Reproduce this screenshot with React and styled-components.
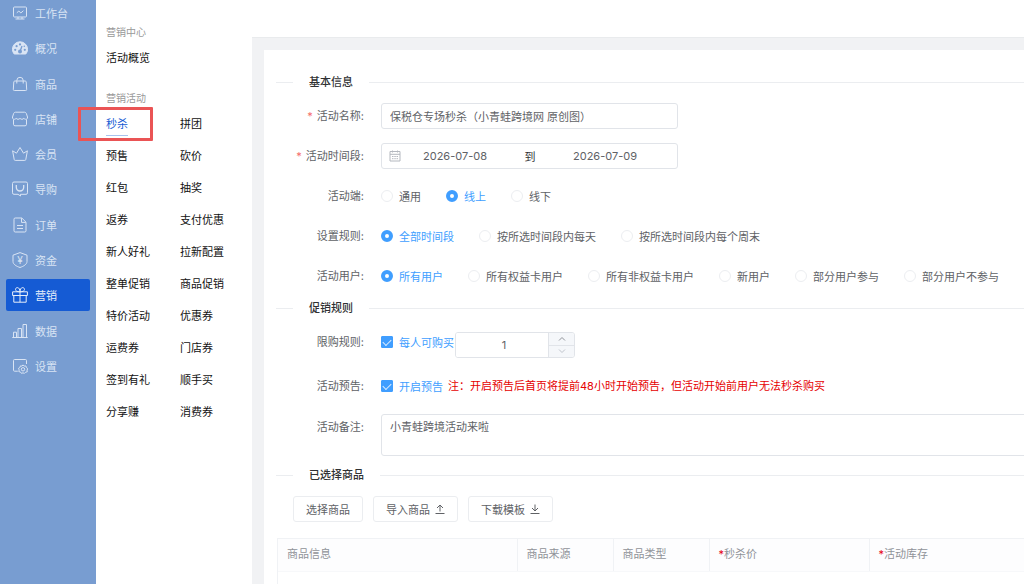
import React, { useState } from 'react'
import styled, { createGlobalStyle, css } from 'styled-components'

const sideItems = [
    { icon: 'desk', label: '工作台' },
    { icon: 'gauge', label: '概况' },
    { icon: 'bag', label: '商品' },
    { icon: 'shop', label: '店铺' },
    { icon: 'crown', label: '会员' },
    { icon: 'guide', label: '导购' },
    { icon: 'order', label: '订单' },
    { icon: 'money', label: '资金' },
    { icon: 'gift', label: '营销' },
    { icon: 'chart', label: '数据' },
    { icon: 'setting', label: '设置' }
]

const activities = [
    '秒杀', '拼团',
    '预售', '砍价',
    '红包', '抽奖',
    '返券', '支付优惠',
    '新人好礼', '拉新配置',
    '整单促销', '商品促销',
    '特价活动', '优惠券',
    '运费券', '门店券',
    '签到有礼', '顺手买',
    '分享赚', '消费券'
]

const clients = ['通用', '线上', '线下']
const rules = ['全部时间段', '按所选时间段内每天', '按所选时间段内每个周末']
const users = ['所有用户', '所有权益卡用户', '所有非权益卡用户', '新用户', '部分用户参与', '部分用户不参与']

const initialFormValues = {
    name: '保税仓专场秒杀（小青蛙跨境网 原创图）',
    start: '2026-07-08',
    end: '2026-07-09',
    client: '线上',
    rule: '全部时间段',
    user: '所有用户',
    limited: true,
    limit: 1,
    preview: true,
    remark: '小青蛙跨境活动来啦'
}

const icons = {
    desk: <>
        <rect x='1.5' y='2' width='13' height='10' rx='1' />
        <path d='M4.800 7.800l2-1.800 2 2 2.600-2.300M3.500 14h9M6 12v2M10 12v2' />
    </>,
    gauge: <>
        <path d='M2.200 14A7.600 7.600 0 0 1 .4 9.400a7.600 7.600 0 0 1 15.200 0 7.600 7.600 0 0 1-1.800 4.600z' fill='currentColor' />
        <g fill='#789dd1' stroke='none'>
            <circle cx='3.200' cy='9.800' r='1.100' />
            <circle cx='4.600' cy='6.200' r='1.100' />
            <circle cx='8' cy='4.400' r='1.100' />
            <circle cx='12.800' cy='9.800' r='1.100' />
            <circle cx='12.300' cy='6.200' r='.8' />
            <circle cx='8' cy='11.600' r='2' />
        </g>
        <path d='M8.200 11l1.800-5' stroke='#789dd1' strokeWidth='1.300' />
    </>,
    bag: <>
        <path d='M2.800 5h10.400a1 1 0 0 1 1 .9l.5 7.500a1 1 0 0 1-1 1.100H2.300a1 1 0 0 1-1-1.100l.5-7.500a1 1 0 0 1 1-.9z' />
        <path d='M4.800 7.500V4.500a3.200 3.200 0 0 1 6.400 0v3' />
    </>,
    shop: <>
        <path d='M3.500 1.200h9a2 2 0 0 1 1.800 1.200L15.500 6v1.300c-1 1.300-2.600 1.300-3.600 0-1 1.300-2.900 1.300-3.900 0-1 1.300-2.900 1.300-3.900 0-1 1.300-2.600 1.300-3.600 0V6l1.200-3.600a2 2 0 0 1 1.800-1.200z' />
        <path d='M1.500 8.500v4.800a1.500 1.500 0 0 0 1.500 1.500h10a1.500 1.500 0 0 0 1.500-1.500V8.500' />
    </>,
    crown: <path d='M.6 4.800l3.900 2.400L8 1.500l3.500 5.700 3.900-2.400-1.600 8.700a1 1 0 0 1-1 .9H3.200a1 1 0 0 1-1-.9z' />,
    guide: <>
        <path d='M2 1h12a1.500 1.500 0 0 1 1.500 1.500v9.300a1.500 1.500 0 0 1-1.500 1.500H8.500V15l-2.500-1.700H2A1.500 1.500 0 0 1 .5 11.800V2.500A1.500 1.500 0 0 1 2 1z' />
        <path d='M4.300 4v2.300a3.700 3.700 0 0 0 7.400 0V4' strokeWidth='1.300' />
    </>,
    order: <>
        <path d='M3.200 1h6.600l4.200 4.200v8.600a1.200 1.200 0 0 1-1.200 1.200H3.200A1.200 1.200 0 0 1 2 13.800V2.200A1.200 1.200 0 0 1 3.200 1z' />
        <path d='M9.500 1.200v4.200h4.300M5 8.500h6M5 11.500h6' />
    </>,
    money: <>
        <path d='M8 .6l7 2.600v6.300c0 2.800-3.400 4.800-7 6-3.600-1.200-7-3.200-7-6V3.200z' />
        <text x='8' y='11.500' textAnchor='middle' fontSize='10' fill='currentColor' stroke='none'>¥</text>
    </>,
    gift: <>
        <path d='M.6 4.800h14.800v3.700H.6zM1.800 8.500h12.400v6.700H1.800zM8 4.800v10.400' />
        <path d='M8 4.800C5.200 4.800 3.500 4 3.500 2.500 3.500 1.300 4.400.6 5.400.6 7.100.6 8 2.600 8 4.800zm0 0c2.800 0 4.500-.8 4.500-2.300 0-1.200-.9-1.900-1.900-1.900C8.900.6 8 2.600 8 4.800z' />
    </>,
    chart: <path d='M1.500 14.500V9.200h3v5.300M6 14.500v-9h3.500v9M11 14.500v-13h3.500v13M.3 14.500h15.400' />,
    setting: <>
        <path d='M14.500 6V2.500a1 1 0 0 0-1-1h-11a1 1 0 0 0-1 1v9.700a1 1 0 0 0 1 1h3.300' />
        <path d='M11 6.900l1.200 1.200 1.700-.2.500 1.700 1.400 1-.8 1.500.3 1.700-1.700.4-1.200 1.200-1.400-.6-1.500.6-1-1.400-1.700-.4.400-1.700-.8-1.500 1.500-.9.500-1.600 1.600.2z' />
        <circle cx='11' cy='11.300' r='1.700' />
    </>
}

function Icon ({ name }){
    return <Svg viewBox='0 0 16 16' aria-hidden='true'>{icons[name]}</Svg>
}

function RadioGroup ({ name, options, value, onChange }){
    return <Options>
        {options.map(option => (
            <Option key={option} $checked={option === value}>
                <Radio name={name} value={option} checked={option === value} onChange={onChange} />
                {option}
            </Option>
        ))}
    </Options>
}

function App (){
    const [formValues, setFormValues] = useState(initialFormValues)

    function handleChange (e){
        const { name, value, type, checked } = e.target
        setFormValues({
            ...formValues,
            [name]: type === 'checkbox' ? checked : value
        })
    }

    const step = amount => {
        setFormValues({ ...formValues, limit: Math.max(1, Number(formValues.limit) + amount) })
    }

    return <Page>
        <GlobalStyle />
        <Sidebar>
            <SideList>
                {sideItems.map(item => (
                    <li key={item.label}>
                        <SideLink href='#' $active={item.label === '营销'}>
                            <Icon name={item.icon} />
                            {item.label}
                        </SideLink>
                    </li>
                ))}
            </SideList>
        </Sidebar>

        <Submenu>
            <MenuTitle>营销中心</MenuTitle>
            <MenuGrid>
                <MenuCell><MenuLink href='#'>活动概览</MenuLink></MenuCell>
            </MenuGrid>
            <MenuTitle>营销活动</MenuTitle>
            <MenuGrid>
                {activities.map((label, i) => (
                    <MenuCell key={label}>
                        <MenuLink href='#' $active={i === 0}>{label}</MenuLink>
                        {i === 0 && <Marker />}
                    </MenuCell>
                ))}
            </MenuGrid>
        </Submenu>

        <Main>
            <Topbar />
            <Card>
                <Divider>基本信息</Divider>
                <Rows $gap={14}>
                    <Row>
                        <Label htmlFor='name' $required>活动名称:</Label>
                        <TextInput id='name' name='name' value={formValues.name} onChange={handleChange} />
                    </Row>
                    <Row>
                        <Label htmlFor='start' $required>活动时间段:</Label>
                        <DateRange>
                            <CalendarSvg viewBox='0 0 12 12' aria-hidden='true'>
                                <path d='M1 1.500h10v9.500H1zM1 4.300h10M3.500.5v2M8.500.5v2M3 6.500h1.500M5.300 6.500h1.500M7.500 6.500H9M3 8.700h1.500M5.300 8.700h1.500M7.500 8.700H9' />
                            </CalendarSvg>
                            <DateInput id='start' name='start' value={formValues.start} onChange={handleChange} />
                            <DateTo>到</DateTo>
                            <DateInput name='end' aria-label='结束日期' value={formValues.end} onChange={handleChange} />
                        </DateRange>
                    </Row>
                    <Row>
                        <Label as='span'>活动端:</Label>
                        <RadioGroup name='client' options={clients} value={formValues.client} onChange={handleChange} />
                    </Row>
                    <Row>
                        <Label as='span'>设置规则:</Label>
                        <RadioGroup name='rule' options={rules} value={formValues.rule} onChange={handleChange} />
                    </Row>
                    <Row>
                        <Label as='span'>活动用户:</Label>
                        <RadioGroup name='user' options={users} value={formValues.user} onChange={handleChange} />
                    </Row>
                </Rows>

                <Divider>促销规则</Divider>
                <Rows $gap={15}>
                    <Row>
                        <Label as='span'>限购规则:</Label>
                        <Option $checked={formValues.limited}>
                            <Checkbox name='limited' checked={formValues.limited} onChange={handleChange} />
                            每人可购买
                        </Option>
                        <NumberField>
                            <NumberInput name='limit' aria-label='限购数量' value={formValues.limit} onChange={handleChange} />
                            <Steppers>
                                <Stepper type='button' aria-label='增加' onClick={() => step(1)}>
                                    <ArrowSvg viewBox='0 0 8 8'><path d='M1 5.500l3-3 3 3' /></ArrowSvg>
                                </Stepper>
                                <Stepper type='button' aria-label='减少' disabled={formValues.limit <= 1} onClick={() => step(-1)}>
                                    <ArrowSvg viewBox='0 0 8 8'><path d='M1 2.500l3 3 3-3' /></ArrowSvg>
                                </Stepper>
                            </Steppers>
                        </NumberField>
                    </Row>
                    <Row>
                        <Label as='span'>活动预告:</Label>
                        <Option $checked={formValues.preview}>
                            <Checkbox name='preview' checked={formValues.preview} onChange={handleChange} />
                            开启预告
                        </Option>
                        <Note>注：开启预告后首页将提前48小时开始预告，但活动开始前用户无法秒杀购买</Note>
                    </Row>
                    <Row>
                        <Label htmlFor='remark'>活动备注:</Label>
                        <TextArea id='remark' name='remark' value={formValues.remark} onChange={handleChange} />
                    </Row>
                </Rows>

                <Divider>已选择商品</Divider>
                <Actions>
                    <Button type='button'>选择商品</Button>
                    <Button type='button'>
                        导入商品
                        <ButtonSvg viewBox='0 0 10 10'><path d='M5 7.500V1M2 4l3-3 3 3M.5 9.500h9' /></ButtonSvg>
                    </Button>
                    <Button type='button'>
                        下载模板
                        <ButtonSvg viewBox='0 0 10 10'><path d='M5 .5V7M2 4l3 3 3-3M.5 9.500h9' /></ButtonSvg>
                    </Button>
                </Actions>
                <TableWrap>
                    <Table>
                        <thead>
                            <tr>
                                <Th $width={239}>商品信息</Th>
                                <Th $width={96}>商品来源</Th>
                                <Th $width={96}>商品类型</Th>
                                <Th $width={160}><Star>*</Star>秒杀价</Th>
                                <Th><Star>*</Star>活动库存</Th>
                            </tr>
                        </thead>
                    </Table>
                </TableWrap>
            </Card>
        </Main>
    </Page>
}

export default App

const GlobalStyle = createGlobalStyle`
    * {
        box-sizing: border-box;
    }
    body {
        margin: 0;
        overflow: hidden;
        background: #f1f2f4;
    }
    body, input, textarea, button {
        font-family: Inter, 'Noto Sans CJK SC', sans-serif;
        font-size: 11px;
        color: #606266;
    }
    a {
        text-decoration: none;
    }
`

const Page = styled.div`
    display: flex;
    height: 100vh;
    overflow: hidden;
`

const Sidebar = styled.nav`
    display: flex;
    flex: 0 0 96px;
    padding: 0 6px 202px;
    background: #789dd1;
`

const SideList = styled.ul`
    display: flex;
    flex: 1;
    flex-direction: column;
    justify-content: space-between;
    margin: -3px 0 0;
    padding: 0;
    list-style: none;
`

const SideLink = styled.a`
    display: flex;
    align-items: center;
    gap: 7px;
    height: 32px;
    padding-left: 6px;
    border-radius: 2px;
    color: #d9e4f4;
    ${({ $active }) => $active && css`
        background: #155bd4;
        color: #e6eefb;
    `}
`

const Svg = styled.svg`
    width: 16px;
    height: 16px;
    fill: none;
    stroke: currentColor;
    stroke-linejoin: round;
`

const Submenu = styled.nav`
    flex: 0 0 156px;
    padding: 24px 0 0 10px;
    background: #fff;
`

const MenuTitle = styled.h2`
    margin: 0 0 2px;
    font-size: 10px;
    font-weight: 400;
    line-height: 16px;
    color: #999;
`

const MenuGrid = styled.ul`
    display: grid;
    grid-template-columns: 74px 1fr;
    margin: 0 0 16px;
    padding: 0;
    list-style: none;
`

const MenuCell = styled.li`
    position: relative;
    display: flex;
    align-items: center;
    height: 32px;
`

const MenuLink = styled.a`
    line-height: 22px;
    border-bottom: 1px solid transparent;
    color: #111;
    ${({ $active }) => $active && css`
        border-color: #a9c3ee;
        color: #155bd4;
    `}
`

const Marker = styled.span`
    position: absolute;
    top: -1px;
    left: -28px;
    width: 75px;
    height: 34px;
    border: 3px solid #ea5455;
    border-radius: 1px;
    pointer-events: none;
`

const Main = styled.main`
    display: flex;
    flex: 1;
    flex-direction: column;
    min-width: 0;
    overflow: hidden;
`

const Topbar = styled.header`
    flex: 0 0 38px;
    background: #fff;
    border-bottom: 1px solid #e9ebed;
`

/* the card runs on past the right edge of the window */
const Card = styled.section`
    flex: 1;
    margin: 12px -16px 0 12px;
    padding: 13px 0 0 12px;
    background: #fff;
`

const Divider = styled.h3`
    display: flex;
    align-items: center;
    gap: 16px;
    margin: 10px 0 12px;
    font-size: 11px;
    font-weight: 500;
    line-height: 18px;
    color: #303133;

    &::before, &::after {
        content: '';
        width: 17px;
        height: 1px;
        background: #ebedf0;
    }
    &::after {
        flex: 1;
    }
`

const Rows = styled.div`
    display: flex;
    flex-direction: column;
    gap: ${({ $gap }) => $gap}px;
`

const Row = styled.div`
    display: flex;
    align-items: flex-start;
`

const Label = styled.label`
    flex: 0 0 105px;
    padding-right: 17px;
    line-height: 26px;
    text-align: right;
    ${({ $required }) => $required && css`
        &::before {
            content: '*';
            margin-right: 4px;
            color: #f56c6c;
        }
    `}
`

const field = css`
    border: 1px solid #e1e4e9;
    border-radius: 3px;
    background: #fff;
    outline: none;
`

const TextInput = styled.input`
    ${field}
    width: 297px;
    height: 26px;
    padding: 0 8px;
`

const DateRange = styled.div`
    ${field}
    display: flex;
    align-items: center;
    width: 297px;
    height: 26px;
    padding: 0 18px 0 7px;
`

const CalendarSvg = styled.svg`
    flex: none;
    width: 12px;
    height: 12px;
    fill: none;
    stroke: #b4b8bf;
`

const DateInput = styled.input`
    flex: 1;
    min-width: 0;
    padding: 0;
    border: none;
    outline: none;
    background: none;
    text-align: center;
`

const DateTo = styled.span`
    flex: 0 0 42px;
    text-align: center;
    color: #303133;
`

const Options = styled.div`
    display: flex;
    gap: 25px;
`

const Option = styled.label`
    display: flex;
    align-items: center;
    gap: 6px;
    height: 26px;
    white-space: nowrap;
    color: ${({ $checked }) => $checked ? '#409eff' : '#606266'};
`

const Radio = styled.input.attrs({ type: 'radio' })`
    appearance: none;
    width: 12px;
    height: 12px;
    margin: 0;
    border: 1px solid #eceef1;
    border-radius: 50%;
    background: #fff;

    &:checked {
        border: 4px solid #409eff;
    }
`

const Checkbox = styled.input.attrs({ type: 'checkbox' })`
    appearance: none;
    display: grid;
    place-items: center;
    width: 12px;
    height: 12px;
    margin: 0;
    border: 1px solid #dcdfe6;
    border-radius: 1px;

    &:checked {
        border-color: #409eff;
        background: #409eff;
    }
    &:checked::after {
        content: '';
        width: 7px;
        height: 4px;
        border: solid #d9ecff;
        border-width: 0 0 1px 1px;
        transform: translateY(-1px) rotate(-45deg);
    }
`

const NumberField = styled.div`
    ${field}
    display: flex;
    width: 120px;
    height: 26px;
    margin: 3px 0 0 1px;
    overflow: hidden;
`

const NumberInput = styled.input`
    flex: 1;
    min-width: 0;
    padding: 0 0 0 4px;
    border: none;
    outline: none;
    text-align: center;
`

const Steppers = styled.div`
    display: flex;
    flex: 0 0 26px;
    flex-direction: column;
    border-left: 1px solid #e1e4e9;
`

const Stepper = styled.button`
    display: flex;
    flex: 1;
    align-items: center;
    justify-content: center;
    padding: 0;
    border: none;
    background: #f5f7fa;
    color: #909399;

    & + & {
        border-top: 1px solid #e1e4e9;
    }
    &:disabled {
        color: #c0c4cc;
    }
`

const ArrowSvg = styled.svg`
    width: 8px;
    height: 8px;
    fill: none;
    stroke: currentColor;
`

const Note = styled.span`
    padding-left: 5px;
    line-height: 26px;
    white-space: nowrap;
    color: #e60000;
`

const TextArea = styled.textarea`
    ${field}
    display: block;
    flex: 1;
    height: 42px;
    padding: 4px 8px;
    line-height: 17px;
    resize: none;
`

const Actions = styled.div`
    display: flex;
    gap: 10px;
    padding-left: 17px;
`

const Button = styled.button`
    display: flex;
    align-items: center;
    gap: 5px;
    height: 26px;
    padding: 0 12px;
    border: 1px solid #ebedf0;
    border-radius: 3px;
    background: #fff;
`

const ButtonSvg = styled.svg`
    width: 10px;
    height: 10px;
    fill: none;
    stroke: currentColor;
`

const TableWrap = styled.div`
    margin: 16px 0 0 1px;
    border: 1px solid #f0f2f5;
    height: 100%;
`

const Table = styled.table`
    width: 100%;
    table-layout: fixed;
    border-collapse: collapse;
`

const Th = styled.th`
    width: ${({ $width }) => $width ? `${$width}px` : 'auto'};
    height: 32px;
    padding: 0 9px 4px;
    border-right: 1px solid #f0f2f5;
    border-bottom: 1px solid #f7f8fa;
    background: #fdfdfe;
    font-weight: 400;
    text-align: left;
    color: #909399;
`

const Star = styled.span`
    color: #e60012;
`
